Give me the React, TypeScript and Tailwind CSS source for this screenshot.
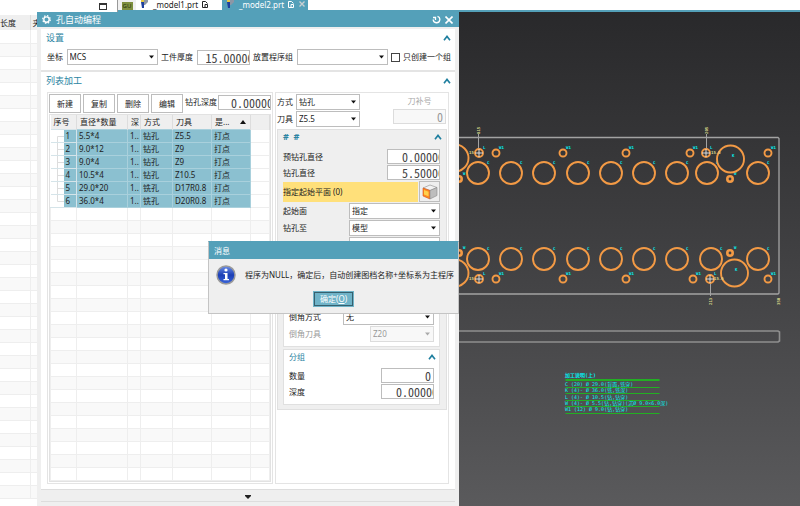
import { ReactNode } from "react";

interface IToolRow {
  id: number;
  size: string;
  method: string;
  tool: string;
}

const toolRows: IToolRow[] = [
  { id: 1, size: "5.5*4", method: "钻孔", tool: "Z5.5" },
  { id: 2, size: "9.0*12", method: "钻孔", tool: "Z9" },
  { id: 3, size: "9.0*4", method: "钻孔", tool: "Z9" },
  { id: 4, size: "10.5*4", method: "钻孔", tool: "Z10.5" },
  { id: 5, size: "29.0*20", method: "铣孔", tool: "D17R0.8" },
  { id: 6, size: "36.0*4", method: "铣孔", tool: "D20R0.8" },
];

const emptyRows = Array.from({ length: 21 }, (_, i) => i);
const backgroundRows = Array.from({ length: 36 }, (_, i) => i);

function Chevron() {
  return (
    <svg width="8" height="6" viewBox="0 0 8 6" fill="none" stroke="#1f7f9f" strokeWidth="1.6">
      <path d="M1 5.2 4 1.4 7 5.2" />
    </svg>
  );
}

function SectionTitle({ children }: { children: ReactNode }) {
  return (
    <div className="flex items-center justify-between text-[#2b84a2]">
      <h2 className="text-[9px] leading-3">{children}</h2>
      <button type="button" aria-label="收起">
        <Chevron />
      </button>
    </div>
  );
}

interface ISelectBox {
  id: string;
  value: string;
  label?: string;
  className: string;
  disabled?: boolean;
}

function SelectBox({ id, value, label, className, disabled }: ISelectBox) {
  return (
    <div className={`relative shrink-0 ${className}`}>
      <select
        id={id}
        aria-label={label}
        disabled={disabled}
        className="block h-4 w-full appearance-none border border-[#bdbdbd] bg-white pl-0.5 text-[8px] leading-3 disabled:border-[#dcdcdc] disabled:bg-[#f8f8f8] disabled:text-[#999]"
      >
        <option>{value}</option>
      </select>
      <svg
        className="pointer-events-none absolute top-1.5 right-1"
        width="5"
        height="4"
        viewBox="0 0 5 4"
        fill={disabled ? "#aaa" : "#111"}
      >
        <path d="M0 .5h5L2.500 3.500z" />
      </svg>
    </div>
  );
}

interface INumberBox {
  id: string;
  value: string;
  className?: string;
  disabled?: boolean;
}

function NumberBox({ id, value, className = "pl-3.5", disabled }: INumberBox) {
  return (
    <input
      id={id}
      type="text"
      defaultValue={value}
      disabled={disabled}
      className={`h-[15px] w-[53px] shrink-0 border border-[#bdbdbd] bg-white font-['Noto_Sans_Mono_CJK_SC','Noto_Sans_CJK_SC',monospace] text-[12px] leading-3 font-light text-[#444] disabled:border-[#dcdcdc] disabled:bg-[#f8f8f8] disabled:text-[#999] ${className}`}
    />
  );
}

function FieldRow({ id, label, children }: { id: string; label: string; children: ReactNode }) {
  return (
    <div className="flex items-center justify-between">
      <label htmlFor={id}>{label}</label>
      {children}
    </div>
  );
}

function PartIcon() {
  return (
    <svg width="9" height="8" viewBox="0 0 9 8">
      <path d="M1 2h3v6H2z" fill="#1e3f9c" />
      <path d="M4 0h4v2L5 5H4z" fill="#8c96a5" />
      <path d="M1 0h3v2H1z" fill="#e5c843" />
    </svg>
  );
}

function PageIcon() {
  return (
    <svg className="mt-px" width="7" height="7" viewBox="0 0 7 7" fill="none" stroke="currentColor">
      <path d="M3 6.500H.5v-6h3l2 2M3 6.500h2.500v-3H3z" />
    </svg>
  );
}

function TabBar() {
  return (
    <header className="flex h-3 shrink-0 text-[8px] leading-[9px]">
      <div className="flex w-[118px] items-start justify-end border-r border-[#999] pt-[3px] pr-2.5">
        <div className="h-[7px] w-2 border border-t-2 border-[#333] bg-white" />
      </div>
      <nav className="flex flex-1 border-b-2 border-[#54a0b9] bg-white">
        <div className="flex w-[18px] items-end justify-center bg-[#f0f0f0]">
          <span className="h-2 w-[11px] overflow-hidden bg-[#7f8f3f] text-center text-[6px] leading-2 text-[#26300c]">
            GU
          </span>
        </div>
        <button type="button" className="flex w-[86px] items-start gap-1 pl-1">
          <PartIcon />
          <span>_model1.prt</span>
          <PageIcon />
        </button>
        <button type="button" className="flex w-[86px] items-start gap-1 bg-[#54a0b9] pl-1 text-white">
          <PartIcon />
          <span>_model2.prt</span>
          <PageIcon />
          <svg className="mt-px" width="6" height="6" viewBox="0 0 6 6" stroke="#c9cfd2" strokeWidth="1.4">
            <path d="M.5.5l5 5M5.500.5l-5 5" />
          </svg>
        </button>
      </nav>
    </header>
  );
}

function BackgroundList() {
  return (
    <aside className="w-[37px] shrink-0 overflow-hidden pt-[3px]">
      <table className="w-[53px] table-fixed border-collapse">
        <thead>
          <tr className="h-[15px] bg-[#efefef] text-left">
            <th className="w-[30px] border-r border-[#ddd] p-0 font-normal">长度</th>
            <th className="p-0 pl-0.5 font-normal">夹</th>
          </tr>
        </thead>
        <tbody>
          {backgroundRows.map((row) => (
            <tr key={row} className="h-[13px] border-b border-[#eee] even:bg-[#f9f9f9]">
              <td className="border-r border-[#eee] p-0" />
              <td className="p-0" />
            </tr>
          ))}
        </tbody>
      </table>
    </aside>
  );
}

function ToolTable() {
  return (
    <div className="mt-px h-[368px] overflow-hidden border border-[#e2e2e2]">
      <table className="w-full table-fixed border-collapse text-left">
        <colgroup>
          <col className="w-[26px]" />
          <col className="w-[51px]" />
          <col className="w-[13px]" />
          <col className="w-[32px]" />
          <col className="w-[39px]" />
          <col className="w-[39px]" />
          <col />
        </colgroup>
        <thead>
          <tr className="h-[14px] bg-[#efefef] *:overflow-hidden *:border-r *:border-[#ddd] *:p-0 *:pl-[3px] *:font-normal *:whitespace-nowrap">
            <th>序号</th>
            <th>直径*数量</th>
            <th>深</th>
            <th>方式</th>
            <th>刀具</th>
            <th>
              <span className="flex items-center justify-between pr-1">
                是...
                <svg width="6" height="4" viewBox="0 0 6 4">
                  <path d="M0 4h6L3 0z" fill="#111" />
                </svg>
              </span>
            </th>
            <th />
          </tr>
        </thead>
        <tbody>
          {toolRows.map((row) => (
            <tr
              key={row.id}
              className="h-[13px] *:overflow-hidden *:border *:border-[#a9d0dc] *:bg-[#8bc0d0] *:p-0 *:pl-0.5 *:leading-3 *:whitespace-nowrap"
            >
              <td className="border-[#d5e4e9]! border-l-0!">
                <div className="-ml-0.5 flex">
                  <svg width="13" height="12" className="bg-white" stroke="#ddd">
                    <path
                      d={
                        row.id === 6
                          ? "M6.500 0v6.500H13"
                          : row.id === 1
                            ? "M6.500 12V6.500H13"
                            : "M6.500 0v12M6.500 6.500H13"
                      }
                      fill="none"
                    />
                  </svg>
                  <span className="pl-0.5">{row.id}</span>
                </div>
              </td>
              <td>{row.size}</td>
              <td>1..</td>
              <td>{row.method}</td>
              <td>{row.tool}</td>
              <td>打点</td>
              <td className="border-[#eee]! bg-white!" />
            </tr>
          ))}
          {emptyRows.map((row) => (
            <tr key={row} className="h-[13px] even:bg-[#f9f9f9] *:border *:border-[#eee] *:p-0">
              <td />
              <td />
              <td />
              <td />
              <td />
              <td />
              <td />
            </tr>
          ))}
        </tbody>
      </table>
    </div>
  );
}

function ToolList() {
  return (
    <div className="w-[226px] border border-[#e4e4e4] p-px">
      <div className="flex gap-0.5">
        {["新建", "复制", "删除", "编辑"].map((name) => (
          <button key={name} type="button" className="h-[19px] w-8 shrink-0 border border-[#bdbdbd] bg-white">
            {name}
          </button>
        ))}
        <div className="flex h-4 flex-1 items-center justify-between">
          <label htmlFor="depth">钻孔深度</label>
          <NumberBox id="depth" value="0.00000" className="pl-3" />
        </div>
      </div>
      <ToolTable />
    </div>
  );
}

function CubeIcon() {
  return (
    <svg width="16" height="16" viewBox="0 0 16 16" stroke="#8a8a8a" strokeWidth=".6">
      <path d="M1 4 8 1l7 2.500-7 3z" fill="#f2f2f2" />
      <path d="M1 4l7 2.500V15l-7-3z" fill="#ff8a1e" stroke="#d4521f" />
      <path d="M2 6l4.500 1.800v4.500L2 10.500z" fill="#ffd04d" stroke="none" />
      <path d="M8 6.500 15 3.500v8L8 15z" fill="#bdbdbd" />
    </svg>
  );
}

function HolePanel() {
  return (
    <div className="border border-[#e0e0e0] bg-[#efefef] pt-px pr-1.5 pb-1 pl-[5px]">
      <div className="-mr-0.5">
        <SectionTitle>
          <span className="font-bold">#&nbsp;&nbsp;#</span>
        </SectionTitle>
      </div>
      <div className="mt-1.5 flex flex-col gap-px">
        <FieldRow id="pre-diameter" label="预钻孔直径">
          <NumberBox id="pre-diameter" value="0.00000" />
        </FieldRow>
        <FieldRow id="diameter" label="钻孔直径">
          <NumberBox id="diameter" value="5.50000" />
        </FieldRow>
        <div className="flex h-[21px] items-center gap-px">
          <div className="flex h-5 flex-1 items-center bg-[#ffe07a]">指定起始平面 (0)</div>
          <button
            type="button"
            aria-label="指定起始平面"
            className="flex h-[21px] w-[21px] items-center justify-center border border-[#bdbdbd] bg-[#efefef]"
          >
            <CubeIcon />
          </button>
        </div>
      </div>
      <div className="mt-px flex flex-col gap-px">
        <FieldRow id="start-face" label="起始面">
          <SelectBox id="start-face" value="指定" className="w-[91px]" />
        </FieldRow>
        <FieldRow id="drill-to" label="钻孔至">
          <SelectBox id="drill-to" value="模型" className="w-[91px]" />
        </FieldRow>
        <div className="flex justify-end">
          <SelectBox id="extra" value="" label="其他" className="w-[91px]" />
        </div>
      </div>
      <div className="mt-1 border border-[#e0e0e0] bg-white px-[5px] pt-[51px] pb-1">
        <FieldRow id="chamfer" label="倒角方式">
          <SelectBox id="chamfer" value="无" className="w-[91px]" />
        </FieldRow>
        <div className="mt-px text-[#999]">
          <FieldRow id="chamfer-tool" label="倒角刀具">
            <SelectBox id="chamfer-tool" value="Z20" className="w-16" disabled />
          </FieldRow>
        </div>
      </div>
      <div className="mt-0.5 border border-[#e0e0e0] bg-white px-[5px] pt-px pb-[5px]">
        <div className="-mr-0.5">
          <SectionTitle>
            <span className="text-[8px]">分组</span>
          </SectionTitle>
        </div>
        <div className="mt-[5px] flex flex-col gap-px">
          <FieldRow id="count" label="数量">
            <NumberBox id="count" value="0" className="pr-0.5 text-right" />
          </FieldRow>
          <FieldRow id="group-depth" label="深度">
            <NumberBox id="group-depth" value="0.00000" />
          </FieldRow>
        </div>
      </div>
    </div>
  );
}

function HoleSettings() {
  return (
    <div className="flex-1 border border-[#e4e4e4] p-px">
      <div className="flex justify-between">
        <div className="flex flex-col gap-px">
          <div className="flex items-center gap-[3px]">
            <label htmlFor="method">方式</label>
            <SelectBox id="method" value="钻孔" className="w-16" />
          </div>
          <div className="flex items-center gap-[3px]">
            <label htmlFor="tool">刀具</label>
            <SelectBox id="tool" value="Z5.5" className="w-16" />
          </div>
        </div>
        <div className="flex flex-col items-center gap-0.5 pt-px pr-px text-[#aaa]">
          <label htmlFor="comp">刀补号</label>
          <NumberBox id="comp" value="0" className="pr-0.5 text-right" disabled />
        </div>
      </div>
      <div className="mt-0.5">
        <HolePanel />
      </div>
    </div>
  );
}

function InfoIcon() {
  return (
    <svg width="20" height="20" viewBox="0 0 20 20">
      <defs>
        <linearGradient id="info" x1="0" y1="0" x2="0" y2="1">
          <stop offset="0" stopColor="#6d8fe6" />
          <stop offset=".5" stopColor="#1c3fb5" />
          <stop offset="1" stopColor="#3a66dc" />
        </linearGradient>
      </defs>
      <circle cx="10" cy="10" r="9" fill="url(#info)" stroke="#9a9a9a" strokeWidth="1.500" />
      <circle cx="10" cy="5" r="1.600" fill="#fff" />
      <path d="M7.500 8h4v6H13v1.300H7.500V14H9V9.200H7.500z" fill="#fff" />
    </svg>
  );
}

function MessageDialog() {
  return (
    <div
      role="dialog"
      aria-label="消息"
      className="absolute top-[229px] right-0 z-10 w-[251px] border border-[#c4c4c4] border-t-[#54a0b9] bg-[#efefef]"
    >
      <h2 className="bg-[#54a0b9] px-[5px] py-0.5 leading-[13px] text-white">消息</h2>
      <div className="flex items-center gap-[9px] pt-1.5 pl-[7px] whitespace-nowrap">
        <InfoIcon />
        <p>程序为NULL，确定后，自动创建图档名称+坐标系为主程序</p>
      </div>
      <div className="flex justify-center pt-1.5 pb-1.5">
        <button type="button" className="h-4 w-[41px] border border-[#6fb3c8] bg-[#6fb3c8] text-white">
          <span className="block border border-[#37606e] leading-3">
            确定(<u>O</u>)
          </span>
        </button>
      </div>
    </div>
  );
}

function ProgramDialog() {
  return (
    <main className="relative flex w-[422px] shrink-0 flex-col bg-[#efefef]">
      <div className="flex h-[15px] items-center bg-[#54a0b9] pr-1.5 pl-[5px] text-white">
        <svg width="9" height="9" viewBox="0 0 10 10" fill="none" stroke="currentColor">
          <circle cx="5" cy="5" r="3" strokeWidth="1.500" />
          <circle cx="5" cy="5" r="4.200" strokeWidth="1.400" strokeDasharray="1.650 1.650" />
        </svg>
        <h1 className="ml-[5px] flex-1 text-[9px] leading-3">孔自动编程</h1>
        <button type="button" aria-label="重置">
          <svg width="9" height="9" viewBox="0 0 9 9" fill="none" stroke="currentColor" strokeWidth="1.300">
            <path d="M5.500 1.300a3.300 3.300 0 1 1-4.300 3.200M1 2.500h2.500V5" />
          </svg>
        </button>
        <button type="button" aria-label="关闭" className="ml-1">
          <svg width="8" height="8" viewBox="0 0 8 8" stroke="currentColor" strokeWidth="1.600">
            <path d="M.5.5l7 7M7.500.5l-7 7" />
          </svg>
        </button>
      </div>

      <section className="mx-1 mt-0.5 h-[43px] border-b-2 border-[#e4e4e4] bg-white pt-[3px] pr-1 pl-[5px]">
        <SectionTitle>设置</SectionTitle>
        <div className="mt-[5px] flex items-center justify-between pl-px whitespace-nowrap">
          <label htmlFor="mcs">坐标</label>
          <SelectBox id="mcs" value="MCS" className="w-[91px]" />
          <label htmlFor="thickness">工件厚度</label>
          <NumberBox id="thickness" value="15.00000" className="pl-2" />
          <label htmlFor="group">放置程序组</label>
          <SelectBox id="group" value="" className="w-[91px]" />
          <label className="flex items-center gap-[3px]">
            <input type="checkbox" className="h-[9px] w-[9px] appearance-none border border-[#444] bg-white" />
            只创建一个组
          </label>
        </div>
      </section>

      <section className="mx-1 bg-white pt-[3px] pb-[5px]">
        <div className="pr-1 pl-[5px]">
          <SectionTitle>列表加工</SectionTitle>
        </div>
        <div className="mt-[5px] flex gap-0.5 pr-1.5 pl-1.5">
          <ToolList />
          <HoleSettings />
        </div>
      </section>

      <div className="mx-1 flex h-[13px] items-center justify-center border-y border-[#ddd] pt-0.5">
        <svg width="6" height="4" viewBox="0 0 6 4">
          <path d="M0 0h6v1L3 4 0 1z" fill="#222" />
        </svg>
      </div>

      <MessageDialog />
    </main>
  );
}

const boreX = [478, 511, 544, 578, 611, 644, 677, 758];
const pinX = [496, 563, 626, 768];

const legend = [
  { y: 386, text: "C  (20) Ø 29.0(背面,铣穿)" },
  { y: 392, text: "K  (4)- Ø 36.0(铣,铣深)" },
  { y: 399, text: "L  (4)- Ø 10.5(钻,钻穿)" },
  { y: 405, text: "W  (4)- Ø 5.5(钻,钻穿)(沉Ø 9.0×6.0深)" },
  { y: 411, text: "W1 (12) Ø 9.0(钻,钻穿)" },
];

function Bore({ x, y }: { x: number; y: number }) {
  return (
    <g>
      <circle cx={x} cy={y} r="11" />
      <text x={x + 9} y={y - 9}>C</text>
    </g>
  );
}

function Pin({ x, y }: { x: number; y: number }) {
  return (
    <g>
      <circle cx={x} cy={y} r="3.500" />
      <text x={x + 3} y={y - 4}>W1</text>
    </g>
  );
}

function Locator({ x, y }: { x: number; y: number }) {
  return (
    <g>
      <circle cx={x} cy={y} r="4" />
      <path d={`M${x - 4} ${y}h8M${x} ${y - 4}v8`} stroke="#ddd" strokeWidth="1" />
      <text x={x + 4} y={y - 4}>L</text>
    </g>
  );
}

function Counterbore({ x, y }: { x: number; y: number }) {
  return (
    <g>
      <circle cx={x} cy={y} r="2.700" strokeWidth="2.600" />
      <text x={x + 4} y={y - 4}>W</text>
    </g>
  );
}

function Viewport() {
  return (
    <section className="min-w-0 flex-1 overflow-hidden bg-linear-to-b from-[#29292b] to-[#5a5a5c]">
      <svg
        className="h-full w-full font-['DejaVu_Sans_Mono','Noto_Sans_CJK_SC',monospace]"
        viewBox="459 12 341 494"
        preserveAspectRatio="xMinYMin meet"
        fill="none"
      >
        <g stroke="#a3a3a3" strokeWidth="1.300">
          <path d="M459 137.500H778l1 1V293l-1 1H459" />
          <path d="M459 331H778l1.500 1v9l-1.500 1H459" stroke="#8f8f8f" strokeWidth="1.600" />
          <path d="M478.500 134v15M706.500 134v15M710.500 283v13" strokeWidth="1" />
        </g>
        <g stroke="#f39a45" strokeWidth="1.900">
          <g className="[&_text]:fill-[#00f0f0] [&_text]:stroke-none [&_text]:text-[4px] [&_text]:font-bold">
            {boreX.map((x) => (
              <g key={x}>
                <Bore x={x} y={173} />
                <Bore x={x} y={259} />
              </g>
            ))}
            <Bore x={707} y={173} />
            <Bore x={711} y={259} />
            {pinX.map((x) => (
              <g key={x}>
                <Pin x={x} y={153} />
                <Pin x={x} y={279} />
              </g>
            ))}
            <Pin x={690} y={153} />
            <Pin x={693} y={279} />
            <Locator x={479} y={153} />
            <Locator x={706} y={153} />
            <Locator x={479} y={279} />
            <Locator x={710} y={279} />
            <Counterbore x={459} y={179} />
            <Counterbore x={459} y={253} />
            <Counterbore x={730} y={179} />
            <Counterbore x={730} y={253} />
            <circle cx="455" cy="158" r="13.500" />
            <circle cx="455" cy="273" r="13.500" />
            <circle cx="730.500" cy="159" r="13.500" />
            <circle cx="734.500" cy="273" r="13.500" />
            <text x="732" y="157">K</text>
            <text x="735" y="271">K</text>
          </g>
        </g>
        <g fill="#d8d68a" className="text-[4px] font-bold">
          <text transform="translate(480 134) rotate(-90)">815</text>
          <text transform="translate(708 134) rotate(-90)">205</text>
          <text transform="translate(712 305) rotate(-90)">213</text>
          <text transform="translate(780 305) rotate(-90)">350</text>
          <text x="469" y="154">15</text>
          <text x="469" y="280">15</text>
          <text x="711" y="154">15.0</text>
          <text x="714" y="280">15.0</text>
        </g>
        <path d="M565.500 380h94" stroke="#14d014" strokeWidth="1.600" />
        <path
          d="M565.500 387.500h94M565.500 393.500h94M565.500 400.500h94M565.500 406.500h94M565.500 413.500h94"
          stroke="#22b022"
        />
        <g fill="#00f0f0" className="text-[5px] whitespace-pre">
          <text x="565" y="377" className="font-bold">加工说明(上)</text>
          {legend.map((row) => (
            <text key={row.y} x="565" y={row.y}>
              {row.text}
            </text>
          ))}
        </g>
      </svg>
    </section>
  );
}

export default function App() {
  return (
    <div className="flex h-screen flex-col overflow-hidden bg-white font-['Noto_Sans','Noto_Sans_CJK_SC',sans-serif] text-[8px] leading-3 text-[#222]">
      <TabBar />
      <div className="flex min-h-0 flex-1">
        <BackgroundList />
        <ProgramDialog />
        <Viewport />
      </div>
    </div>
  );
}
